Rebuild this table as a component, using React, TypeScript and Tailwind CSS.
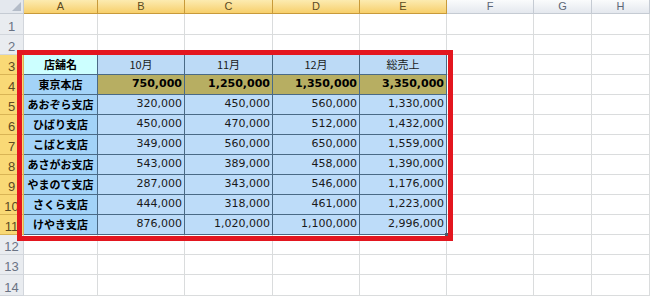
import { ReactNode } from 'react'

const cols = ['A', 'B', 'C', 'D', 'E', 'F', 'G', 'H']
const selectedCols = ['A', 'B', 'C', 'D', 'E']

const header = ['店舗名', '10月', '11月', '12月', '総売上']
const head = { name: '東京本店', values: ['750,000', '1,250,000', '1,350,000', '3,350,000'] }
const branches = [
  { name: 'あおぞら支店', values: ['320,000', '450,000', '560,000', '1,330,000'] },
  { name: 'ひばり支店', values: ['450,000', '470,000', '512,000', '1,432,000'] },
  { name: 'こばと支店', values: ['349,000', '560,000', '650,000', '1,559,000'] },
  { name: 'あさがお支店', values: ['543,000', '389,000', '458,000', '1,390,000'] },
  { name: 'やまのて支店', values: ['287,000', '343,000', '546,000', '1,176,000'] },
  { name: 'さくら支店', values: ['444,000', '318,000', '461,000', '1,223,000'] },
  { name: 'けやき支店', values: ['876,000', '1,020,000', '1,100,000', '2,996,000'] },
]

const jp = "font-['Noto_Sans_CJK_JP',sans-serif]"
const num = "font-['DejaVu_Sans',sans-serif]"

const ColHeader = ({ label }: { label: string }) => {
  const sel = selectedCols.includes(label)
  return (
    <div
      className={
        sel
          ? "flex items-center justify-center border-r border-b border-[#c89a3a] bg-gradient-to-b from-[#fcebb0] to-[#f7cf6a] text-[11px] leading-none text-[#5b4a22] font-['Liberation_Sans',sans-serif]"
          : "flex items-center justify-center border-r border-b border-[#c5cbd3] bg-gradient-to-b from-[#fafbfc] to-[#e4e8ee] text-[11px] leading-none text-[#5c6677] font-['Liberation_Sans',sans-serif]"
      }
    >
      {label}
    </div>
  )
}

const RowHeader = ({ n }: { n: number }) => {
  const sel = n >= 3 && n <= 11
  return (
    <div
      className={
        sel
          ? "flex items-end justify-center pb-[1px] border-r border-b border-[#d9b455] bg-[#f9d976] text-[13px] leading-none text-[#5b4a22] font-['Liberation_Sans',sans-serif]"
          : "flex items-end justify-center pb-[1px] border-r border-b border-[#d2d6dc] bg-[#e9ecf0] text-[13px] leading-none text-[#6a7384] font-['Liberation_Sans',sans-serif]"
      }
    >
      {n}
    </div>
  )
}

const Empty = () => <div className="border-r border-b border-[#dadcdd] bg-white" />

const Cell = ({ className, children }: { className: string; children?: ReactNode }) => (
  <div className={'flex items-center border-r border-b border-[#4a6a86] ' + className}>{children}</div>
)

export default function App() {
  return (
    <div className="relative h-[296px] w-[650px] overflow-hidden bg-white">
      <div className="grid grid-cols-[24px_74px_87px_88px_87px_87px_87px_58px_58px] grid-rows-[14px_21px_20px_20px_20px_20px_20px_20px_20px_20px_20px_20px_20px_20px_21px]">
        {/* corner */}
        <div className="relative border-r border-b border-[#c5cbd3] bg-[#e4e8ee]">
          <svg className="absolute right-[2px] bottom-[2px]" width="9" height="9" viewBox="0 0 9 9">
            <polygon points="9,0 9,9 0,9" fill="#b4bcc8" />
          </svg>
        </div>
        {cols.map((c) => (
          <ColHeader key={c} label={c} />
        ))}

        {[1, 2].map((n) => (
          <div key={n} className="contents">
            <RowHeader n={n} />
            {cols.map((c) => (
              <Empty key={c} />
            ))}
          </div>
        ))}

        {/* row 3: header */}
        <RowHeader n={3} />
        <Cell className={'justify-center bg-[#ccffff] text-[11px] font-bold text-black ' + jp}>{header[0]}</Cell>
        {header.slice(1).map((h) => (
          <Cell key={h} className={'justify-center bg-[#bcdaf6] text-[11px] text-[#1a1a1a] ' + jp}>
            {h}
          </Cell>
        ))}
        {['F', 'G', 'H'].map((c) => (
          <Empty key={c} />
        ))}

        {/* row 4: head office */}
        <RowHeader n={4} />
        <Cell className={'justify-center bg-[#a3d3f8] text-[11px] font-bold text-black ' + jp}>{head.name}</Cell>
        {head.values.map((v, i) => (
          <Cell key={i} className={'justify-end pr-[2px] bg-[#b7ae62] text-[11px] font-bold text-black ' + num}>
            {v}
          </Cell>
        ))}
        {['F', 'G', 'H'].map((c) => (
          <Empty key={c} />
        ))}

        {branches.map((b, r) => (
          <div key={b.name} className="contents">
            <RowHeader n={r + 5} />
            <Cell className={'justify-center bg-[#a3d3f8] text-[11px] font-bold text-black ' + jp}>{b.name}</Cell>
            {b.values.map((v, i) => (
              <Cell key={i} className={'justify-end pr-[2px] bg-[#bddcf9] text-[11px] text-[#1a1a1a] ' + num}>
                {v}
              </Cell>
            ))}
            {['F', 'G', 'H'].map((c) => (
              <Empty key={c} />
            ))}
          </div>
        ))}

        {[12, 13, 14].map((n) => (
          <div key={n} className="contents">
            <RowHeader n={n} />
            {cols.map((c) => (
              <Empty key={c} />
            ))}
          </div>
        ))}
      </div>

      {/* fill handle */}
      <div className="absolute left-[445px] top-[233px] h-[3px] w-[3px] bg-[#4a5a6a]" />
      {/* selection highlight */}
      <div className="pointer-events-none absolute left-[17px] top-[50px] h-[191px] w-[436px] border-[5px] border-[#e3161f]" />
    </div>
  )
}
